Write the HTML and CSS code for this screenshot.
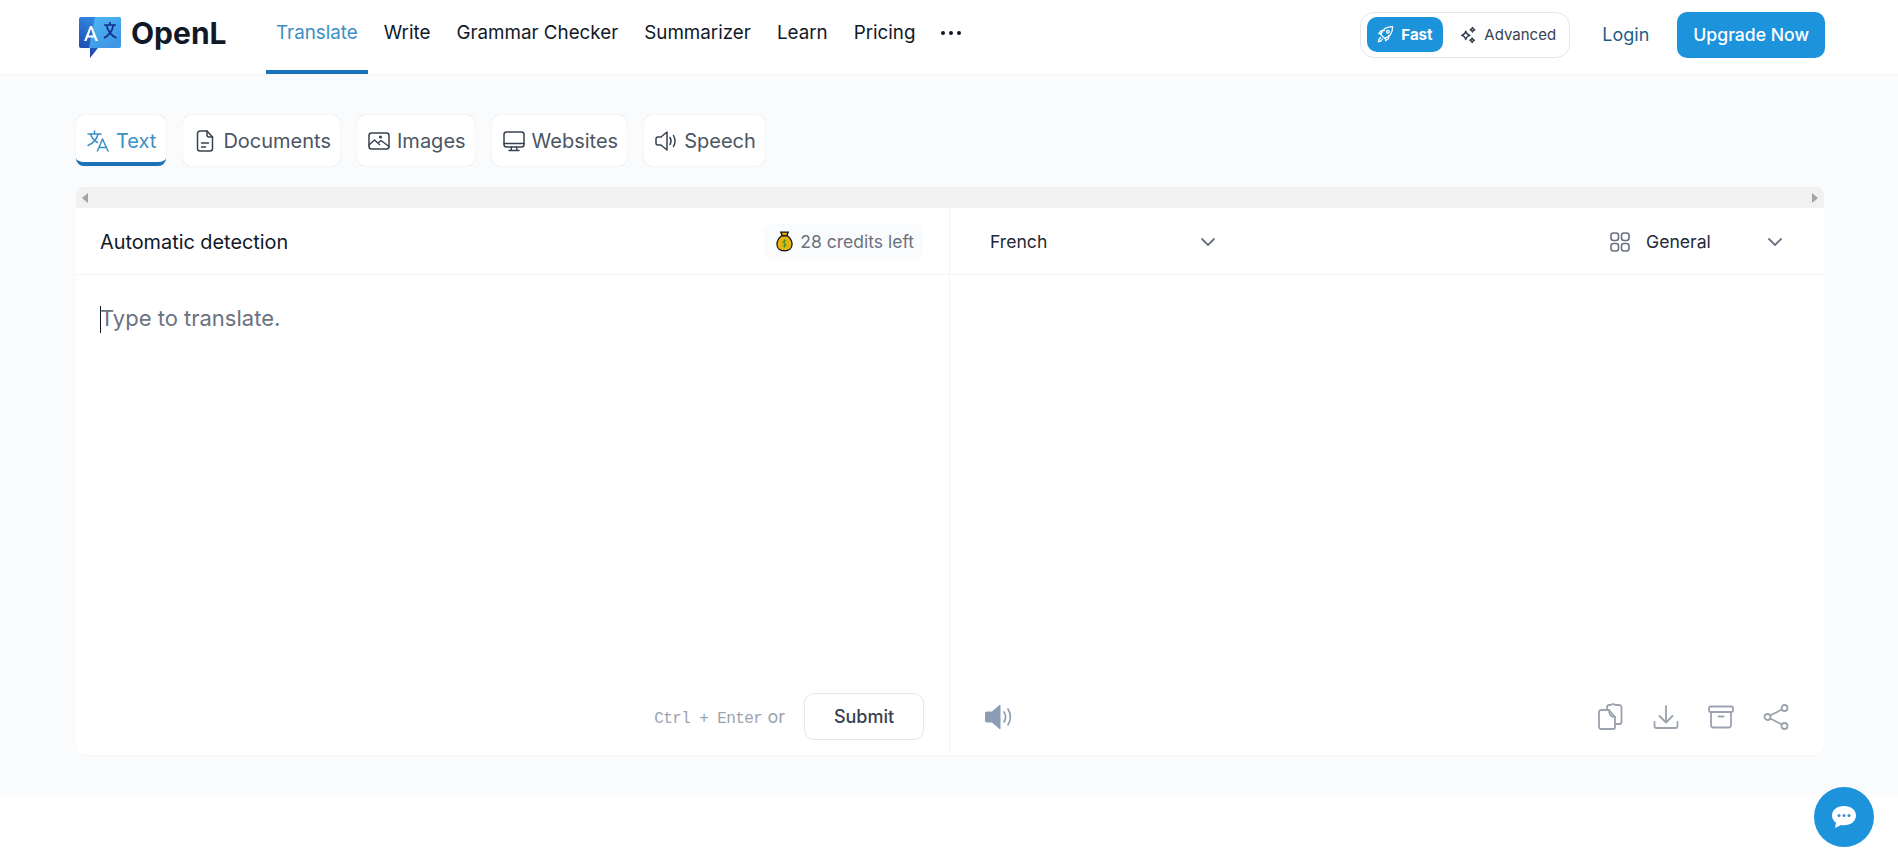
FILE: index.html
```html
<!DOCTYPE html>
<html lang="en">
<head>
  <meta charset="UTF-8">
  <title>OpenL Translate</title>
  <link rel="stylesheet" href="styles.css">
</head>
<body>

  <header class="topbar">
    <a class="logo" href="#">
      <svg class="logo-mark" width="43" height="42" viewBox="0 0 43 42">
        <defs>
          <linearGradient id="logoLeft" x1="0.5" y1="0" x2="0.3" y2="1">
            <stop offset="0" stop-color="#2f86e0"/>
            <stop offset="1" stop-color="#1c3fa8"/>
          </linearGradient>
          <linearGradient id="logoRight" x1="0" y1="0" x2="0.6" y2="1">
            <stop offset="0" stop-color="#4fb8f5"/>
            <stop offset="1" stop-color="#3f96e4"/>
          </linearGradient>
        </defs>
        <path d="M2 0H20L14 31H19L11 41V31H2Q0 31 0 29V2Q0 0 2 0Z" fill="url(#logoLeft)"/>
        <path d="M16 0H41Q42 0 42 2V29Q42 31 40 31H10L16 0Z" fill="url(#logoRight)"/>
        <path d="M5 24L11 9H13L19 24H16.5L15.2 20.5H8.8L7.5 24ZM9.6 18.4H14.4L12 12Z" fill="#fff"/>
        <path d="M25 8H37M31 5V8M34.5 8C33 15 29 19 25 21M27.5 8C29 15 33 19 37.500 21" fill="none" stroke="#16308f" stroke-width="1.7"/>
      </svg>
      <span class="logo-name">OpenL</span>
    </a>
    <nav class="main-nav">
      <a class="nav-link active" href="#">Translate</a>
      <a class="nav-link" href="#">Write</a>
      <a class="nav-link" href="#">Grammar Checker</a>
      <a class="nav-link" href="#">Summarizer</a>
      <a class="nav-link" href="#">Learn</a>
      <a class="nav-link" href="#">Pricing</a>
      <a class="nav-link" href="#">
        <svg width="20" height="4" viewBox="0 0 20 4" fill="#111827"><circle cx="2" cy="2" r="2"/><circle cx="10" cy="2" r="2"/><circle cx="18" cy="2" r="2"/></svg>
      </a>
    </nav>
    <div class="topbar-right">
      <div class="mode-switch">
        <button class="mode mode-fast">
          <svg width="19" height="19" viewBox="0 0 24 24" fill="none" stroke="#fff" stroke-width="1.6" stroke-linecap="round" stroke-linejoin="round">
            <path d="M9 15l-3-3c1.500-5 6-10 15-10 0 9-5 13.500-10 15z"/><circle cx="15" cy="8.500" r="1.700"/><path d="M7 11H3.500l3-4h4M12 16v4l4-3v-4M6 16c-2 1-3 3-3 5 2 0 4-1 5-3"/>
          </svg>
          Fast
        </button>
        <button class="mode mode-advanced">
          <svg width="18" height="18" viewBox="0 0 24 24" fill="none" stroke="#374151" stroke-width="1.800" stroke-linejoin="round">
            <path d="M9 7c.8 3.500 2 4.700 5.500 5.500C11 13.300 9.800 14.500 9 18c-.8-3.500-2-4.700-5.500-5.500C7 11.700 8.200 10.500 9 7z"/><path d="M18 2c.4 1.800 1 2.400 3 3-2 .6-2.600 1.200-3 3-.4-1.800-1-2.400-3-3 2-.6 2.600-1.200 3-3zM17.500 16c.4 1.800 1 2.400 3 3-2 .6-2.600 1.200-3 3-.4-1.800-1-2.400-3-3 2-.6 2.600-1.200 3-3z"/>
          </svg>
          Advanced
        </button>
      </div>
      <a class="login" href="#">Login</a>
      <a class="upgrade" href="#">Upgrade Now</a>
    </div>
  </header>

  <main class="page">
    <div class="tabs">
      <a class="tab active" href="#">
        <svg width="24" height="24" viewBox="0 0 24 24" fill="none" stroke="#3b8fc4" stroke-width="1.500" stroke-linecap="round" stroke-linejoin="round">
          <path d="M2 5h13M8.500 2v3M12 5c-1 5-4.500 9-10 11.500M4.500 5c1 3.500 3.500 6.500 7 8.500M11.500 22l5-12 5.500 12M13 18.500h7.500"/>
        </svg>
        Text
      </a>
      <a class="tab" href="#">
        <svg width="24" height="24" viewBox="0 0 24 24" fill="none" stroke="#374151" stroke-width="1.500" stroke-linecap="round" stroke-linejoin="round">
          <path d="M14 2H7a2.500 2.500 0 0 0-2.500 2.500v15A2.500 2.500 0 0 0 7 22h10a2.500 2.500 0 0 0 2.500-2.500V8z"/><path d="M14 2v4a2 2 0 0 0 2 2h3.500M8.500 14h7M8.500 18h4"/>
        </svg>
        Documents
      </a>
      <a class="tab" href="#">
        <svg width="24" height="24" viewBox="0 0 24 24" fill="none" stroke="#374151" stroke-width="1.500" stroke-linecap="round" stroke-linejoin="round">
          <rect x="2" y="4" width="20" height="16" rx="2.500"/><path d="M2 16l5.500-5 5 4.500M11 14l3-2.500 8 6"/><circle cx="13.500" cy="8" r=".8"/>
        </svg>
        Images
      </a>
      <a class="tab" href="#">
        <svg width="24" height="24" viewBox="0 0 24 24" fill="none" stroke="#374151" stroke-width="1.500" stroke-linecap="round" stroke-linejoin="round">
          <rect x="2" y="3" width="20" height="15" rx="2.500"/><path d="M2 14.500h20M9.500 18l-.5 3M14.500 18l.5 3M7 21.500h10"/>
        </svg>
        Websites
      </a>
      <a class="tab" href="#">
        <svg width="24" height="24" viewBox="0 0 24 24" fill="none" stroke="#374151" stroke-width="1.500" stroke-linecap="round" stroke-linejoin="round">
          <path d="M13 3v18l-6-5H4a2 2 0 0 1-2-2v-4a2 2 0 0 1 2-2h3z"/><path d="M16 8.500c1.300 2.200 1.300 4.800 0 7M19.500 6.500c2 3.500 2 7.500 0 11"/>
        </svg>
        Speech
      </a>
    </div>

    <div class="scroll-strip">
      <span class="arrow arrow-left"></span>
      <span class="arrow arrow-right"></span>
    </div>

    <section class="card">
      <div class="pane pane-source">
        <div class="pane-head">
          <span class="detect">Automatic detection</span>
          <span class="credits">
            <svg width="17" height="21" viewBox="0 0 18 22">
              <path d="M5 1h8l-1.500 4h-5z" fill="#e0a80c" stroke="#111" stroke-width="1.300"/>
              <path d="M6 5C2 8 1 11 1 14c0 4 3 7 8 7s8-3 8-7c0-3-1-6-5-9z" fill="#e8b30f" stroke="#111" stroke-width="1.300"/>
              <path d="M11 10.500C10.500 9.500 7.500 9.500 7.300 11.500c0 2 3.500 1.300 3.500 3.300 0 1.800-3 1.700-3.800.7M9 8.500v9" fill="none" stroke="#3f8f2f" stroke-width="1"/>
            </svg>
            28 credits left
          </span>
        </div>
        <div class="pane-body">
          <div class="placeholder"><span class="caret"></span>Type to translate.</div>
        </div>
        <div class="pane-foot foot-right">
          <span class="hint"><span class="keys">Ctrl + Enter</span> or</span>
          <button class="submit">Submit</button>
        </div>
      </div>
      <div class="pane pane-target">
        <div class="pane-head target-head">
          <div class="select select-lang">
            <span>French</span>
            <svg width="16" height="10" viewBox="0 0 16 10" fill="none" stroke="#6b7280" stroke-width="1.800" stroke-linecap="round" stroke-linejoin="round"><path d="M2 2l6 6 6-6"/></svg>
          </div>
          <div class="select">
            <svg width="20" height="20" viewBox="0 0 20 20" fill="none" stroke="#6b7280" stroke-width="1.600"><rect x="1" y="1" width="7.500" height="7.500" rx="2.500"/><rect x="11.500" y="1" width="7.500" height="7.500" rx="2.500"/><rect x="1" y="11.500" width="7.500" height="7.500" rx="2.500"/><rect x="11.500" y="11.500" width="7.500" height="7.500" rx="2.500"/></svg>
            <span class="style-name">General</span>
            <svg width="16" height="10" viewBox="0 0 16 10" fill="none" stroke="#6b7280" stroke-width="1.800" stroke-linecap="round" stroke-linejoin="round"><path d="M2 2l6 6 6-6"/></svg>
          </div>
        </div>
        <div class="pane-body"></div>
        <div class="pane-foot foot-tools">
          <svg width="28" height="26" viewBox="0 0 28 26">
            <path d="M15 1v24L7 18H2a2 2 0 0 1-2-2v-6a2 2 0 0 1 2-2h5z" fill="#8c9cb5" stroke="#8c9cb5" stroke-linejoin="round"/>
            <path d="M19 8c2 3 2 7 0 10M23 5c3 5 3 11 0 16" fill="none" stroke="#8c9cb5" stroke-width="1.600" stroke-linecap="round"/>
          </svg>
          <div class="tools">
            <svg width="26" height="28" viewBox="0 0 26 28" fill="none" stroke="#9ca3af" stroke-width="1.800" stroke-linecap="round" stroke-linejoin="round">
              <path d="M9 7V4a2 2 0 0 1 2-2h1.500a3 2 0 0 1 5 0H21a2.500 2.500 0 0 1 2.500 2.500V19a2 2 0 0 1-2 2H17"/>
              <path d="M3 7h8l6 7v10a2 2 0 0 1-2 2H3a2 2 0 0 1-2-2V9a2 2 0 0 1 2-2z"/><path d="M11 7c0 4 2 7 6 7"/>
            </svg>
            <svg width="26" height="26" viewBox="0 0 26 26" fill="none" stroke="#9ca3af" stroke-width="1.800" stroke-linecap="round" stroke-linejoin="round">
              <path d="M13 2v16M6.500 12l6.500 6.500 6.500-6.500M1.500 18v4.500a1.500 1.500 0 0 0 1.500 1.500h20a1.500 1.500 0 0 0 1.500-1.500V18"/>
            </svg>
            <svg width="26" height="24" viewBox="0 0 26 24" fill="none" stroke="#9ca3af" stroke-width="1.800" stroke-linecap="round" stroke-linejoin="round">
              <rect x="1" y="1.500" width="24" height="5.500" rx="1.500"/><path d="M3 7v13a2.500 2.500 0 0 0 2.500 2.500h15A2.500 2.500 0 0 0 23 20V7M10.500 11.500h5"/>
            </svg>
            <svg width="26" height="26" viewBox="0 0 26 26" fill="none" stroke="#9ca3af" stroke-width="1.800">
              <circle cx="21.500" cy="4" r="3"/><circle cx="4.500" cy="13" r="3"/><circle cx="21.500" cy="22" r="3"/><path d="M7.200 11.500L18.800 5.500M7.200 14.500l11.600 6"/>
            </svg>
          </div>
        </div>
      </div>
    </section>
  </main>

  <button class="chat-btn">
    <svg width="26" height="24" viewBox="0 0 26 24">
      <path d="M13 1C6 1 1 5 1 10.500c0 3 1.500 5.500 4 7.300L4 23l6-3c1 .2 2 .3 3 .3 7 0 12-4.300 12-9.800S20 1 13 1z" fill="#fff"/>
      <circle cx="8" cy="10.500" r="1.500" fill="#3f8fd0"/><circle cx="13" cy="10.500" r="1.500" fill="#3f8fd0"/><circle cx="18" cy="10.500" r="1.500" fill="#3f8fd0"/>
    </svg>
  </button>

</body>
</html>
```

FILE: styles.css
```css
* {
  box-sizing: border-box;
}

body {
  margin: 0;
  height: 864px;
  overflow: hidden;
  background: #fff;
  font-family: 'Inter', 'Liberation Sans', sans-serif;
  color: #111827;
}

a {
  text-decoration: none;
  color: inherit;
}

button {
  font-family: inherit;
  cursor: pointer;
}

/* top bar */
.topbar {
  display: flex;
  align-items: center;
  height: 75px;
  padding: 0 73px 0 79px;
  background: #fff;
  border-bottom: 1px solid #f3f4f6;
}

.logo {
  display: flex;
  align-items: center;
  gap: 9px;
  width: 187px;
  margin-top: 1px;
}

.logo-name {
  margin-bottom: 9px;
  font-size: 30px;
  font-weight: 700;
  color: #111827;
}

.main-nav {
  display: flex;
  align-self: stretch;
  gap: 6px;
}

.nav-link {
  display: flex;
  align-items: center;
  height: 74px;
  padding: 0 10px 5px;
  font-size: 18.8px;
  color: #111827;
  border-bottom: 4px solid transparent;
}

.nav-link.active {
  color: #3b8fc4;
  border-bottom-color: #1a73b8;
}

.topbar-right {
  display: flex;
  align-items: center;
  margin-left: auto;
  margin-bottom: 5px;
}

.mode-switch {
  display: flex;
  align-items: center;
  width: 210px;
  height: 46px;
  padding: 0 6px;
  border: 1px solid #e5e7eb;
  border-radius: 14px;
}

.mode {
  display: flex;
  align-items: center;
  border: none;
  background: none;
  height: 35px;
  font-size: 15px;
}

.mode-fast {
  gap: 6px;
  width: 76px;
  padding: 0 0 0 9px;
  color: #fff;
  font-weight: 700;
  background: #1d93dc;
  border-radius: 10px;
}

.mode-advanced {
  gap: 7px;
  padding: 0 0 0 16px;
  color: #374151;
}

.login {
  margin-left: 32px;
  font-size: 18px;
  color: #1e5f8a;
}

.upgrade {
  display: flex;
  align-items: center;
  height: 46px;
  margin-left: 28px;
  padding: 0 16px;
  font-size: 17.6px;
  font-weight: 500;
  color: #fff;
  background: #1d93dc;
  border-radius: 10px;
}

/* main */
.page {
  height: 721px;
  padding: 40px 74px 0 76px;
  background: #fafbfd;
}

.tabs {
  display: flex;
  gap: 17px;
}

.tab {
  display: flex;
  align-items: center;
  gap: 6px;
  height: 51px;
  padding: 0 9px 0 10px;
  font-size: 20px;
  color: #4b5563;
  background: #fff;
  border-radius: 8px;
  box-shadow: 0 0 1px rgba(0, 0, 0, 0.22);
}

.tab.active {
  padding: 4px 10px 0;
  color: #3b8fc4;
  border-bottom: 4px solid #1a73b8;
}

.scroll-strip {
  display: flex;
  justify-content: space-between;
  align-items: center;
  height: 21px;
  margin-top: 21px;
  padding: 0 6px;
  background: #f1f1f1;
  border-radius: 8px 8px 0 0;
}

.arrow {
  width: 0;
  height: 0;
  border-top: 5px solid transparent;
  border-bottom: 5px solid transparent;
}

.arrow-left {
  border-right: 6px solid #a3a3a3;
}

.arrow-right {
  border-left: 6px solid #a3a3a3;
}

.card {
  display: flex;
  height: 548px;
  background: #fff;
  border-bottom: 1px solid #f3f4f6;
  border-radius: 0 0 10px 10px;
}

.pane {
  display: flex;
  flex-direction: column;
}

.pane-source {
  flex: 0 0 873px;
}

.pane-target {
  flex: 1;
  border-left: 1px solid #f3f4f6;
}

.pane-head {
  display: flex;
  align-items: center;
  justify-content: space-between;
  height: 67px;
  padding: 1px 26px 0 24px;
  border-bottom: 1px solid #f3f4f6;
}

.detect {
  font-size: 19.85px;
  color: #111827;
}

.credits {
  display: flex;
  align-items: center;
  gap: 7px;
  height: 36px;
  padding: 0 9px 0 12px;
  font-size: 17.5px;
  color: #6b7280;
  background: #fafbfc;
  border-radius: 8px;
}

.pane-body {
  flex: 1;
  padding: 28px 24px 0;
}

.placeholder {
  font-size: 22px;
  line-height: 30px;
  color: #6b7280;
}

.caret {
  display: inline-block;
  width: 1px;
  height: 27px;
  margin-right: -1px;
  vertical-align: -7px;
  background: #111827;
}

.pane-foot {
  display: flex;
  align-items: center;
  height: 63px;
  padding-bottom: 14px;
}

.foot-right {
  justify-content: flex-end;
  gap: 19px;
  padding-right: 25px;
}

.hint {
  font-size: 18px;
  color: #9ca3af;
}

.keys {
  font-family: 'Liberation Mono', 'DejaVu Sans Mono', monospace;
  font-size: 16px;
  letter-spacing: -0.6px;
}

.submit {
  width: 120px;
  height: 47px;
  font-size: 18px;
  font-weight: 450;
  color: #374151;
  background: #fff;
  border: 1px solid #e5e7eb;
  border-radius: 10px;
}

.foot-tools {
  justify-content: space-between;
  padding: 0 35px 14px 35px;
}

.tools {
  display: flex;
  align-items: center;
  gap: 29px;
}

.target-head {
  padding: 1px 41px 0 40px;
}

.select {
  display: flex;
  align-items: center;
  font-size: 17.6px;
  color: #1f2937;
}

.select-lang {
  justify-content: space-between;
  width: 226px;
}

.style-name {
  width: 121px;
  margin-left: 16px;
}

.chat-btn {
  position: absolute;
  left: 1814px;
  top: 787px;
  display: flex;
  align-items: center;
  justify-content: center;
  width: 60px;
  height: 60px;
  padding: 0;
  background: #1d93dc;
  border: none;
  border-radius: 50%;
}
```
